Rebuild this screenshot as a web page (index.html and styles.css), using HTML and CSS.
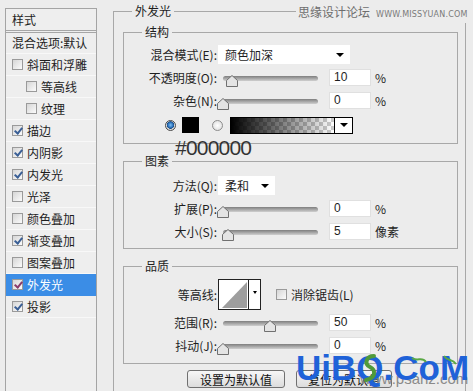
FILE: index.html
```html
<!DOCTYPE html>
<html lang="zh-CN">
<head>
  <meta charset="UTF-8">
  <title>图层样式 - 外发光</title>
  <link rel="stylesheet" href="styles.css">
</head>
<body>

<div class="page">

  <aside class="styles-panel">
    <div class="panel-head">样式</div>
    <div class="blend-row">混合选项:默认</div>
    <ul class="fx-list">
      <li><span class="cb"></span>斜面和浮雕</li>
      <li class="sub"><span class="cb"></span>等高线</li>
      <li class="sub"><span class="cb"></span>纹理</li>
      <li><span class="cb on"></span>描边</li>
      <li><span class="cb on"></span>内阴影</li>
      <li><span class="cb on"></span>内发光</li>
      <li><span class="cb"></span>光泽</li>
      <li><span class="cb"></span>颜色叠加</li>
      <li><span class="cb on"></span>渐变叠加</li>
      <li><span class="cb"></span>图案叠加</li>
      <li class="active"><span class="cb on"></span>外发光</li>
      <li><span class="cb on"></span>投影</li>
    </ul>
  </aside>

  <section class="outer">
    <div class="group-title">外发光</div>

    <div class="group structure">
      <div class="group-title">结构</div>
      <div class="field">
        <label>混合模式(E):</label>
        <div class="select wide">颜色加深<i class="arrow"></i></div>
      </div>
      <div class="field">
        <label>不透明度(O):</label>
        <div class="slider" style="--v:10"><div class="track"></div><svg class="thumb" width="12" height="12" viewBox="0 0 12 12"><path d="M0.5 5.5 L6 0.5 L11.5 5.5 V11.5 H0.5 Z" fill="#e4e4e4" stroke="#707070"/></svg></div>
        <div class="num">10</div><span class="unit">%</span>
      </div>
      <div class="field">
        <label>杂色(N):</label>
        <div class="slider" style="--v:0"><div class="track"></div><svg class="thumb" width="12" height="12" viewBox="0 0 12 12"><path d="M0.5 5.5 L6 0.5 L11.5 5.5 V11.5 H0.5 Z" fill="#e4e4e4" stroke="#707070"/></svg></div>
        <div class="num">0</div><span class="unit">%</span>
      </div>
      <div class="color-row">
        <span class="radio on"></span>
        <span class="swatch"></span>
        <span class="radio"></span>
        <span class="gradient"></span><span class="grad-drop"><i class="arrow"></i></span>
      </div>
    </div>

    <div class="hex">#000000</div>

    <div class="group elements">
      <div class="group-title">图素</div>
      <div class="field">
        <label>方法(Q):</label>
        <div class="select short">柔和<i class="arrow"></i></div>
      </div>
      <div class="field">
        <label>扩展(P):</label>
        <div class="slider" style="--v:0"><div class="track"></div><svg class="thumb" width="12" height="12" viewBox="0 0 12 12"><path d="M0.5 5.5 L6 0.5 L11.5 5.5 V11.5 H0.5 Z" fill="#e4e4e4" stroke="#707070"/></svg></div>
        <div class="num">0</div><span class="unit">%</span>
      </div>
      <div class="field">
        <label>大小(S):</label>
        <div class="slider" style="--v:5"><div class="track"></div><svg class="thumb" width="12" height="12" viewBox="0 0 12 12"><path d="M0.5 5.5 L6 0.5 L11.5 5.5 V11.5 H0.5 Z" fill="#e4e4e4" stroke="#707070"/></svg></div>
        <div class="num">5</div><span class="unit">像素</span>
      </div>
    </div>

    <div class="group quality">
      <div class="group-title">品质</div>
      <div class="field contour-row">
        <label>等高线:</label>
        <div class="contour">
          <svg width="29" height="29" viewBox="0 0 29 29"><rect width="29" height="29" fill="#fff"/><path d="M3 28 L28 2 V28 Z" fill="#9e9e9e"/></svg>
          <span class="contour-drop"><i class="arrow small"></i></span>
        </div>
        <span class="cb aa"></span><span>消除锯齿(L)</span>
      </div>
      <div class="field">
        <label>范围(R):</label>
        <div class="slider" style="--v:50"><div class="track"></div><svg class="thumb" width="12" height="12" viewBox="0 0 12 12"><path d="M0.5 5.5 L6 0.5 L11.5 5.5 V11.5 H0.5 Z" fill="#e4e4e4" stroke="#707070"/></svg></div>
        <div class="num">50</div><span class="unit">%</span>
      </div>
      <div class="field">
        <label>抖动(J):</label>
        <div class="slider" style="--v:0"><div class="track"></div><svg class="thumb" width="12" height="12" viewBox="0 0 12 12"><path d="M0.5 5.5 L6 0.5 L11.5 5.5 V11.5 H0.5 Z" fill="#e4e4e4" stroke="#707070"/></svg></div>
        <div class="num">0</div><span class="unit">%</span>
      </div>
    </div>

    <div class="buttons">
      <button class="btn first-btn">设置为默认值</button>
      <button class="btn">复位为默认值</button>
    </div>
  </section>

  <div class="wm-top"><span>思缘设计论坛</span><span class="wm-url">WWW.MISSYUAN.COM</span></div>
  <div class="wm-bottom">
    <span class="wm-gray">www.psahz.com</span>
    <span class="wm-blue">UiBQ.CoM</span>
    <svg class="wm-lizard" width="110" height="34" viewBox="0 0 110 34">
      <path d="M22 4 C14 4 12 12 18 15 C24 18 24 26 14 28" fill="none" stroke="#4f9a3a" stroke-width="4" stroke-linecap="round"/>
      <path d="M60 6 C66 10 70 4 74 10" fill="none" stroke="#5aa844" stroke-width="2"/>
      <path d="M92 4 C96 10 100 6 104 12" fill="none" stroke="#5aa844" stroke-width="2"/>
    </svg>
  </div>

</div>

</body>
</html>
```

FILE: styles.css
```css
* { box-sizing: border-box; }
html, body {
  margin: 0;
  padding: 0;
  background: #ececec;
  color: #1e1e1e;
  font-family: "Noto Sans CJK SC", sans-serif;
  font-size: 12px;
  overflow: hidden;
}
.page {
  position: relative;
  display: flex;
  align-items: flex-start;
  height: 391px;
  overflow: hidden;
}

/* 左侧样式列表 */
.styles-panel {
  width: 92px;
  height: 390px;
  margin: 8px 0 0 5px;
  border: 1px solid #a4a4a4;
  background: #eeeeee;
}
.panel-head {
  height: 24px;
  line-height: 21px;
  padding-left: 6px;
  border-bottom: 3px double #a6a6a6;
}
.blend-row {
  height: 21px;
  line-height: 20px;
  padding-left: 6px;
  border-bottom: 1px solid #f8f8f8;
  white-space: nowrap;
}
.fx-list {
  list-style: none;
  margin: 0;
  padding: 0;
}
.fx-list li {
  display: flex;
  align-items: center;
  height: 22px;
  padding-left: 6px;
  border-bottom: 1px solid #f8f8f8;
  white-space: nowrap;
}
.fx-list li.sub { padding-left: 20px; }
.fx-list li.active { background: #3b8de6; color: #fff; border-bottom-color: #3b8de6; }

.cb {
  position: relative;
  flex: 0 0 11px;
  width: 11px;
  height: 11px;
  margin-right: 4px;
  border: 1px solid #9a9a9a;
  background: linear-gradient(135deg, #d6d6d6, #fbfbfb);
}
.cb.on::after {
  content: "";
  position: absolute;
  left: 3px;
  top: 0;
  width: 3px;
  height: 6px;
  border: solid #3a5f96;
  border-width: 0 2px 2px 0;
  transform: rotate(40deg);
}
.active .cb.on::after { border-color: #8a3c6c; }

/* 右侧参数区 */
.outer {
  width: 353px;
  height: 390px;
  margin: 11px 0 0 16px;
  border: 1px solid #a8a8a8;
}
.group {
  margin: 0 7px 0 9px;
  border: 1px solid #a8a8a8;
  padding-bottom: 5px;
}
.group-title {
  width: fit-content;
  margin: -9px 0 0 18px;
  padding: 0 3px;
  line-height: 16px;
  background: #ececec;
}
.group .group-title { margin-bottom: 3px; }
.structure { margin-top: 13px; }
.elements .group-title { margin-bottom: 5px; }
.quality { margin-top: 17px; padding-bottom: 6px; }

.hex {
  position: relative;
  width: fit-content;
  height: 26px;
  margin: -9px 0 0 61px;
  font-family: "Liberation Sans", sans-serif;
  font-size: 21px;
  letter-spacing: -0.8px;
  line-height: 26px;
  color: #333;
}

.field {
  display: flex;
  align-items: center;
  height: 23px;
}
.field label {
  width: 93px;
  margin-right: 1px;
  text-align: right;
  white-space: nowrap;
}
.select {
  display: flex;
  align-items: center;
  justify-content: space-between;
  height: 19px;
  padding: 0 6px 0 7px;
  background: #fff;
}
.select.wide { width: 132px; }
.select.short { width: 57px; }
.arrow {
  width: 0;
  height: 0;
  border-left: 4px solid transparent;
  border-right: 4px solid transparent;
  border-top: 4px solid #000;
}
.arrow.small {
  border-left-width: 2px;
  border-right-width: 2px;
  border-top-width: 3px;
}

.slider {
  position: relative;
  align-self: flex-start;
  width: 104px;
  height: 12px;
  margin-top: 9px;
}
.track {
  height: 5px;
  margin: 1px 4px 0 5px;
  border-radius: 3px;
  background: linear-gradient(#7e7e7e, #cfcfcf);
}
.thumb {
  position: absolute;
  top: 0;
  left: calc(var(--v) * 0.94px - 1px);
}
.num {
  width: 42px;
  height: 17px;
  margin-left: 7px;
  padding-left: 4px;
  background: #fff;
  border: 1px solid #e0e0e0;
  font-family: "Liberation Sans", sans-serif;
  font-size: 12px;
  line-height: 15px;
}
.unit { margin-left: 4px; }

.color-row {
  display: flex;
  align-items: center;
  height: 26px;
  padding-left: 41px;
}
.radio {
  width: 11px;
  height: 11px;
  border-radius: 50%;
  border: 1px solid #8c8c8c;
  background: radial-gradient(circle, #ffffff, #d8d8d8);
}
.radio.on {
  border-color: #4a4a4a;
  background: radial-gradient(circle at 50% 45%, #7cc0f2 0, #2f73bd 2.5px, #174a82 3.5px, #dcdcdc 4px);
}
.swatch {
  width: 17px;
  height: 16px;
  margin: 0 13px 0 6px;
  background: #000;
}
.gradient {
  width: 105px;
  height: 17px;
  margin-left: 7px;
  border: 1px solid #000;
  background:
    linear-gradient(to right, #000, rgba(0, 0, 0, 0)),
    repeating-conic-gradient(#cccccc 0 25%, #ffffff 0 50%) 0 0 / 8px 8px;
}
.grad-drop {
  display: flex;
  align-items: center;
  justify-content: center;
  width: 18px;
  height: 17px;
  border: 1px solid #000;
  border-left: 0;
  background: #fff;
}

.contour-row { height: 34px; }
.contour {
  display: flex;
  height: 31px;
  border: 1px solid #222;
}
.contour svg { display: block; width: 29px; height: 29px; }
.contour-drop {
  display: flex;
  justify-content: center;
  padding-top: 11px;
  width: 12px;
  border-left: 1px solid #222;
  background: #fff;
}
.cb.aa { margin-left: 15px; }

.buttons {
  display: flex;
  margin: 6px 0 0 73px;
}
.btn {
  width: 96px;
  height: 18px;
  padding: 0;
  border: 1px solid #707070;
  border-radius: 3px;
  background: linear-gradient(#f7f7f7, #dcdcdc);
  font-family: "Noto Sans CJK SC", sans-serif;
  font-size: 12px;
  line-height: 15px;
  color: #111;
}
.btn.first-btn { width: 98px; margin-right: 11px; }

/* 水印 */
.wm-top {
  position: absolute;
  left: 296px;
  top: 4px;
  display: flex;
  align-items: baseline;
  padding: 0 2px;
  background: #ececec;
  color: #6e6e6e;
  font-size: 12px;
  line-height: 16px;
}
.wm-url {
  margin-left: 6px;
  font-family: "DejaVu Sans", sans-serif;
  font-size: 8px;
  letter-spacing: 0.2px;
  color: #7a7a7a;
}
.wm-bottom {
  position: absolute;
  left: 296px;
  top: 350px;
  width: 170px;
  height: 41px;
}
.wm-gray {
  position: absolute;
  left: 64px;
  top: 20px;
  font-family: "Liberation Sans", sans-serif;
  font-size: 15px;
  color: #8a8a8a;
}
.wm-blue {
  position: absolute;
  left: 0;
  top: 0;
  font-family: "Liberation Sans", sans-serif;
  font-weight: bold;
  font-size: 35px;
  line-height: 35px;
  color: #1f62d8;
}
.wm-lizard {
  position: absolute;
  left: 56px;
  top: 2px;
}
```
